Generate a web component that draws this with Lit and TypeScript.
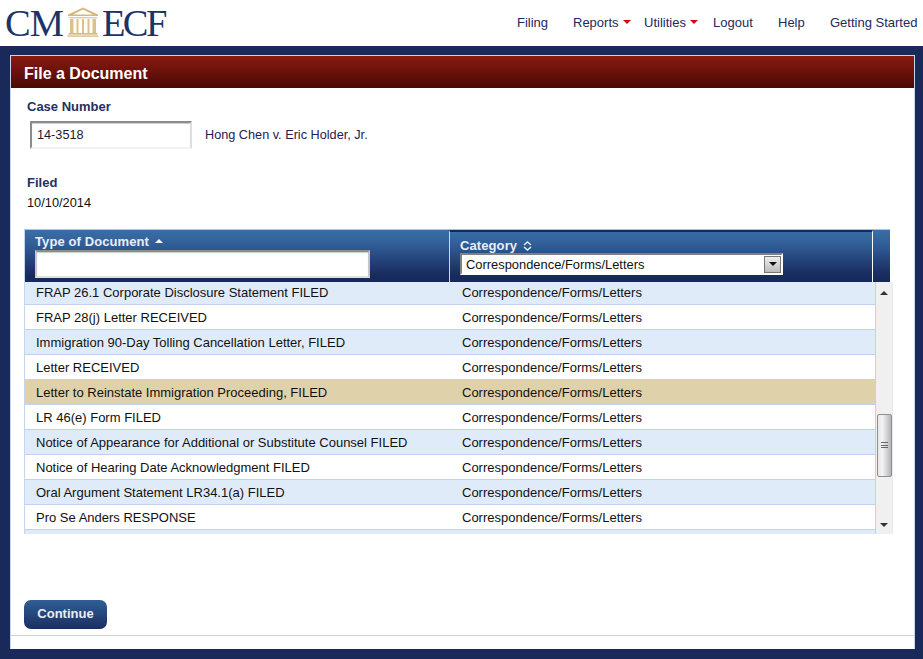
import { LitElement, html, css, svg } from "lit";
import { customElement } from "lit/decorators.js";

const ROWS = [
  "FRAP 26.1 Corporate Disclosure Statement FILED",
  "FRAP 28(j) Letter RECEIVED",
  "Immigration 90-Day Tolling Cancellation Letter, FILED",
  "Letter RECEIVED",
  "Letter to Reinstate Immigration Proceeding, FILED",
  "LR 46(e) Form FILED",
  "Notice of Appearance for Additional or Substitute Counsel FILED",
  "Notice of Hearing Date Acknowledgment FILED",
  "Oral Argument Statement LR34.1(a) FILED",
  "Pro Se Anders RESPONSE",
];
const CAT = "Correspondence/Forms/Letters";

const NAV: { label: string; width: number; caret?: boolean }[] = [
  { label: "Filing", width: 56 },
  { label: "Reports", width: 71, caret: true },
  { label: "Utilities", width: 69, caret: true },
  { label: "Logout", width: 65 },
  { label: "Help", width: 52 },
  { label: "Getting Started", width: 93 },
];

const temple = svg`<svg class="temple" width="32" height="31" viewBox="0 0 32 31">
  <path d="M16 0.5 L31 7.5 V9 H1 V7.5 Z M16 2.6 L6 7.4 H26 Z" fill="#d6b97a" fill-rule="evenodd"/>
  <rect x="2" y="10" width="28" height="1.4" fill="#e3cd9c"/>
  <g fill="#dcc28a">
    <rect x="3" y="12" width="3.5" height="14"/><rect x="9.5" y="12" width="2" height="14"/>
    <rect x="15" y="12" width="2" height="14"/><rect x="20.5" y="12" width="2" height="14"/>
    <rect x="25.5" y="12" width="3.5" height="14"/>
  </g>
  <rect x="1.5" y="26" width="29" height="1.6" fill="#d6b97a"/>
  <rect x="0.5" y="28.2" width="31" height="1.8" fill="#e3cd9c"/>
</svg>`;

@customElement("app-root")
export class AppRoot extends LitElement {
  static styles = css`
    :host { display: block; width: 923px; height: 659px; overflow: hidden; font-family: "Liberation Sans", Arial, sans-serif; font-size: 13px; color: #111; background: #18295a; }
    .top { height: 46px; background: #fff; display: flex; justify-content: space-between; }
    .logo { display: flex; align-items: center; padding: 4px 0 0 5px; height: 38px; font-family: "Liberation Serif", serif; font-size: 38.5px; color: #1b3468; line-height: 38px; }
    .cm { letter-spacing: -1px; }
    .ecf { letter-spacing: -2.6px; }
    .temple { margin: 3px 3px 0 4px; align-self: flex-start; }
    .nav { display: flex; padding-top: 15px; font-size: 13px; color: #25285a; line-height: 15px; }
    .nav span { display: block; white-space: nowrap; }
    .caret { width: 0; height: 0; border: 4px solid transparent; border-top: 4px solid #d90012; border-bottom: 0; margin: 5px 0 0 4px; }
    .navitem { display: flex; }
    .panel { margin: 9px 8px 0 10px; height: 594px; box-sizing: border-box; background: #fff; border: 1px solid #c5d5ee; border-bottom: 0; display: flex; flex-direction: column; }
    .title { height: 32px; background: linear-gradient(#891a10, #4a0a05); color: #fff; font-weight: bold; font-size: 16px; line-height: 35px; padding-left: 13px; }
    .body { flex: 1; padding: 11px 0 0 14px; position: relative; display: flex; flex-direction: column; }
    .lbl { font-weight: bold; color: #25305c; line-height: 16px; font-size: 13px; margin-left: 2px; }
    .case { display: flex; align-items: center; margin: 6px 0 0 5px; height: 28px; font-size: 12.7px; }
    .input { width: 162px; height: 28px; box-sizing: border-box; border: 2px solid; border-color: #8b8b8b #dedede #f2f2f2 #8b8b8b; background: #fff; padding: 0 5px; line-height: 25px; color: #1a1a2a; box-shadow: inset 0 1px 1px #ccc; }
    .cname { margin-left: 13px; color: #1f2050; }
    .filed { margin-top: 26px; }
    .date { margin: 4px 0 0 2px; line-height: 16px; color: #111; font-size: 12.8px; }
    .table { margin-top: 18px; width: 868px; margin-left: -1px; }
    .thead { display: flex; height: 53px; width: 866px; background: linear-gradient(#3a6ea5 0%, #32609a 25%, #192c5f 85%, #17285a 100%); border-top: 1px solid #aac3e6; box-sizing: border-box; }
    .th { box-sizing: border-box; color: #e8eef7; font-weight: bold; font-size: 13px; letter-spacing: 0.1px; }
    .th1 { width: 425px; padding: 4px 0 0 10px; line-height: 15px; border-left: 1px solid #c5d5ee; }
    .th2 { width: 424px; padding: 6px 0 0 10px; line-height: 15px; border-left: 1px solid #c9d8ee; border-right: 1px solid #fff; border-top: 2px solid #17285a; }
    .th3 { flex: 1; }
    .sorted { display: inline-block; width: 0; height: 0; border: 4px solid transparent; border-bottom: 4px solid #fff; border-top: 0; margin: 0 0 3px 2px; }
    .updown { vertical-align: -1px; margin-left: 2px; }
    .filter { margin-top: 1px; width: 335px; height: 28px; box-sizing: border-box; background: #fff; border: 2px solid; border-color: #8d8d8d #c4c4c4 #e0e0e0 #c8c8c8; box-shadow: inset 0 1px 1px #ccc; }
    .select { margin-top: 0; width: 323px; height: 22px; box-sizing: border-box; background: #fff; border: 2px solid; border-color: #808080 #fff #fff #808080; display: flex; justify-content: space-between; align-items: center; font-weight: normal; color: #111; font-size: 12.9px; letter-spacing: 0; padding-left: 4px; }
    .selbtn { width: 17px; height: 17px; box-sizing: border-box; border: 1px solid #777; background: linear-gradient(#eee, #bbb); display: flex; align-items: center; justify-content: center; }
    .selbtn i { width: 0; height: 0; border: 4px solid transparent; border-top: 4px solid #111; border-bottom: 0; }
    .tbody { display: flex; height: 252px; background: #e0ebfa; border-left: 1px solid #c5d5ee; box-sizing: border-box; width: 869px; }
    .rows { width: 850px; }
    .row { display: flex; height: 25px; box-sizing: border-box; border-bottom: 1px solid #bfd3f1; line-height: 25px; background: #fff; color: #111; }
    .row:first-child { height: 23px; line-height: 21px; }
    .row.alt { background: #e0ebfa; }
    .row.sel { background: #dfd1aa; }
    .c1 { width: 426px; padding-left: 10px; box-sizing: border-box; white-space: nowrap; }
    .c2 { padding-left: 10px; white-space: nowrap; }
    .c1 { padding-left: 10px; }
    .sb { width: 18px; background: #f0f0f0; display: flex; flex-direction: column; align-items: center; box-sizing: border-box; border-left: 1px solid #bfd3f1; border-right: 1px solid #e6ecf6; padding: 9px 0 7px; }
    .up, .down { width: 0; height: 0; border: 4px solid transparent; }
    .up { border-bottom: 4px solid #333; border-top: 0; }
    .down { border-top: 4px solid #333; border-bottom: 0; }
    .thumb { margin-top: 119px; width: 15px; height: 63px; box-sizing: border-box; border: 1px solid #8e8e8e; border-radius: 2px; background: linear-gradient(90deg, #e8e8ec, #f2f2f2 35%, #b4b4b8); display: flex; align-items: center; justify-content: center; }
    .grip { width: 7px; height: 8px; background: repeating-linear-gradient(#666 0 1px, transparent 1px 2.5px); }
    .spacer { flex: 1; }
    .foot { margin-top: 66px; margin-left: -1px; width: 83px; height: 29px; box-sizing: border-box; border-radius: 7px; background: linear-gradient(#2f5f96, #1b2e60); color: #e9eef6; font-weight: bold; font-size: 13px; line-height: 28px; text-align: center; }
    .rule { position: absolute; left: 0; right: 0; bottom: 13px; height: 1px; background: #c9d4e2; }
    .row .c1 { width: 427px; padding-left: 11px; }
  `;

  render() {
    return html`
      <div class="top">
        <div class="logo"><span class="cm">CM</span>${temple}<span class="ecf">ECF</span></div>
        <div class="nav">
          ${NAV.map((n) => html`<div class="navitem" style="width:${n.width}px"><span>${n.label}</span>${n.caret ? html`<i class="caret"></i>` : ""}</div>`)}
        </div>
      </div>
      <div class="panel">
        <div class="title">File a Document</div>
        <div class="body">
          <div class="lbl">Case Number</div>
          <div class="case"><div class="input">14-3518</div><div class="cname">Hong Chen v. Eric Holder, Jr.</div></div>
          <div class="lbl filed">Filed</div>
          <div class="date">10/10/2014</div>
          <div class="table">
            <div class="thead">
              <div class="th th1"><span class="tlabel">Type of Document</span> <i class="sorted"></i><div class="filter"></div></div>
              <div class="th th2">Category
                <svg class="updown" width="9" height="10" viewBox="0 0 9 10"><path d="M1 4 L4.5 1 L8 4 M1 6 L4.5 9 L8 6" fill="none" stroke="#e8eef7" stroke-width="1.4"/></svg>
                <div class="select"><span>${CAT}</span><div class="selbtn"><i></i></div></div>
              </div>
              <div class="th3"></div>
            </div>
            <div class="tbody">
              <div class="rows">
                ${ROWS.map((r, i) => html`<div class="row ${i === 4 ? "sel" : i % 2 === 0 ? "alt" : ""}"><div class="c1">${r}</div><div class="c2">${CAT}</div></div>`)}
              </div>
              <div class="sb"><i class="up"></i><div class="thumb"><div class="grip"></div></div><div class="spacer"></div><i class="down"></i></div>
            </div>
          </div>
          <div class="foot">Continue</div>
          <div class="rule"></div>
        </div>
      </div>`;
  }
}
